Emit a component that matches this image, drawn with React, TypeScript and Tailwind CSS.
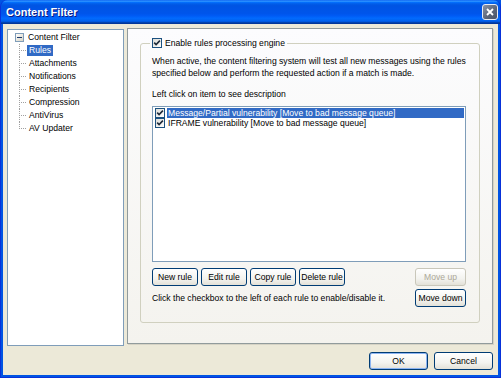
import React from "react";

const font = { fontFamily: '"Liberation Sans", Arial, sans-serif' };

function Check() {
  return (
    <span className="inline-flex items-center justify-center w-[10px] h-[10px] border border-[#1C5180] bg-[linear-gradient(135deg,#DCDCD7,#FFFFFF)] shrink-0">
      <svg width="8" height="8" viewBox="0 0 8 8">
        <path d="M1.2 3.6 L3.1 5.6 L6.9 1.6" stroke="#1E2A3A" strokeWidth="1.6" fill="none" />
      </svg>
    </span>
  );
}

function Btn({
  children,
  className = "",
  disabled = false,
  isDefault = false,
}: {
  children: React.ReactNode;
  className?: string;
  disabled?: boolean;
  isDefault?: boolean;
}) {
  const base =
    "flex items-center justify-center h-[18px] rounded-[3px] border text-[8.6px] leading-none bg-[linear-gradient(to_bottom,#FFFFFF,#F3F3EF_60%,#E3E1D8)]";
  const state = disabled
    ? "border-[#C9C7BA] text-[#ACA899]"
    : isDefault
    ? "border-[#003C74] text-black shadow-[inset_0_0_0_1px_#8CB4F2]"
    : "border-[#003C74] text-black";
  return <div className={`${base} ${state} ${className}`}>{children}</div>;
}

const treeChildren = [
  "Rules",
  "Attachments",
  "Notifications",
  "Recipients",
  "Compression",
  "AntiVirus",
  "AV Updater",
];

export default function App() {
  return (
    <div className="w-[501px] h-[378px] bg-[#0054E3]" style={font}>
      <div className="flex flex-col w-full h-full rounded-t-[7px] bg-[#0054E3] border-x-[1px] border-b-[1px] border-[#0831D9]">
        {/* Title bar */}
        <div className="h-[24px] flex items-center justify-between pl-[5px] pr-[2px] rounded-t-[7px] bg-[linear-gradient(to_bottom,#0058EE_0%,#3593FF_4%,#288EFF_6%,#127DFF_8%,#036FFC_10%,#0262EE_14%,#0057E5_20%,#0054E3_24%,#0055EB_56%,#005BF5_66%,#026AFE_76%,#0062EF_86%,#0052D6_92%,#0040AB_94%,#003092_100%)]">
          <span className="text-white font-bold text-[11px] [text-shadow:1px_1px_0_#0A1883]">
            Content Filter
          </span>
          <div className="w-[16px] h-[16px] rounded-[3px] border border-[#E8ECF4] bg-[linear-gradient(135deg,#8A94A8,#5A6478_60%,#4A5468)] flex items-center justify-center">
            <svg width="10" height="10" viewBox="0 0 10 10">
              <path d="M2 2 L8 8 M8 2 L2 8" stroke="white" strokeWidth="1.8" />
            </svg>
          </div>
        </div>
        {/* Body */}
        <div className="flex-1 mx-[2px] mb-[2px] bg-[#ECE9D8] flex flex-col pl-[4px] pr-[4px] pt-[4px] text-[8.6px] text-black">
          <div className="flex items-start gap-[3px]">
            {/* Tree */}
            <div className="mt-[1px] w-[117px] h-[317px] bg-white border border-[#7F9DB9] pt-[1px]">
              <div className="h-[13px] flex items-center pl-[7px]">
                <span className="w-[9px] h-[9px] border border-[#7F9DB9] bg-[linear-gradient(135deg,#FFFFFF,#D8D4C4)] flex items-center justify-center">
                  <span className="w-[5px] h-[1px] bg-[#1C3A6E]" />
                </span>
                <span className="ml-[4px]">Content Filter</span>
              </div>
              {treeChildren.map((c, i) => (
                <div key={c} className="h-[13px] flex items-stretch pl-[11px]">
                  <div className="relative w-[8px]">
                    <div
                      className={`absolute left-0 top-0 w-0 border-l border-dotted border-[#A0A0A0] ${
                        i === treeChildren.length - 1 ? "h-[7px]" : "h-[13px]"
                      }`}
                    />
                    <div className="absolute left-0 top-[6px] w-[7px] h-0 border-t border-dotted border-[#A0A0A0]" />
                  </div>
                  <div className="flex items-center">
                    <span
                      className={
                        c === "Rules"
                          ? "bg-[#316AC5] text-white px-[2px] h-[11px] leading-[11px]"
                          : "px-[2px] leading-[11px]"
                      }
                    >
                      {c}
                    </span>
                  </div>
                </div>
              ))}
            </div>
            {/* Panel */}
            <div className="w-[366px] h-[316px] border border-[#919B9C] bg-[linear-gradient(to_bottom,#FCFCFE,#F4F3EE)] shadow-[1px_1px_0_#D6D3C5] px-[12px] pt-[8px]">
              <fieldset className="border border-[#D0D0BF] rounded-[3px] pl-[11px] pr-[13px] pb-[15px]">
                <legend className="-ml-[2px] px-[2px] h-[12px] flex items-center">
                  <Check />
                  <span className="ml-[3px] leading-[12px]">Enable rules processing engine</span>
                </legend>
                <div className="mt-[6px] leading-[12px]">
                  <div>When active, the content filtering system will test all new messages using the rules</div>
                  <div>specified below and perform the requested action if a match is made.</div>
                </div>
                <div className="mt-[9px] leading-[12px]">Left click on item to see description</div>
                <div className="mt-[6px] h-[156px] bg-white border border-[#7F9DB9] pt-[1px] pl-[2px] pr-[1px]">
                  <div className="flex items-center h-[10px]">
                    <Check />
                    <span className="ml-[2px] flex-1 bg-[#316AC5] text-white leading-[10px] h-[10px] pl-[1px]">
                      Message/Partial vulnerability [Move to bad message queue]
                    </span>
                  </div>
                  <div className="flex items-center h-[10px]">
                    <Check />
                    <span className="ml-[2px] leading-[10px] pl-[1px]">
                      IFRAME vulnerability [Move to bad message queue]
                    </span>
                  </div>
                </div>
                <div className="mt-[6px] flex justify-between items-start">
                  <div className="flex gap-[3px]">
                    <Btn className="w-[46px]">New rule</Btn>
                    <Btn className="w-[46px]">Edit rule</Btn>
                    <Btn className="w-[46px]">Copy rule</Btn>
                    <Btn className="w-[46px]">Delete rule</Btn>
                  </div>
                  <Btn className="w-[51px]" disabled>
                    Move up
                  </Btn>
                </div>
                <div className="mt-[3px] flex justify-between items-center">
                  <span className="leading-[12px]">
                    Click the checkbox to the left of each rule to enable/disable it.
                  </span>
                  <Btn className="w-[51px]">Move down</Btn>
                </div>
              </fieldset>
            </div>
          </div>
          <div className="mt-[6px] flex justify-end gap-[6px] pr-[1px]">
            <Btn className="w-[59px]" isDefault>
              OK
            </Btn>
            <Btn className="w-[59px]">Cancel</Btn>
          </div>
        </div>
      </div>
    </div>
  );
}
